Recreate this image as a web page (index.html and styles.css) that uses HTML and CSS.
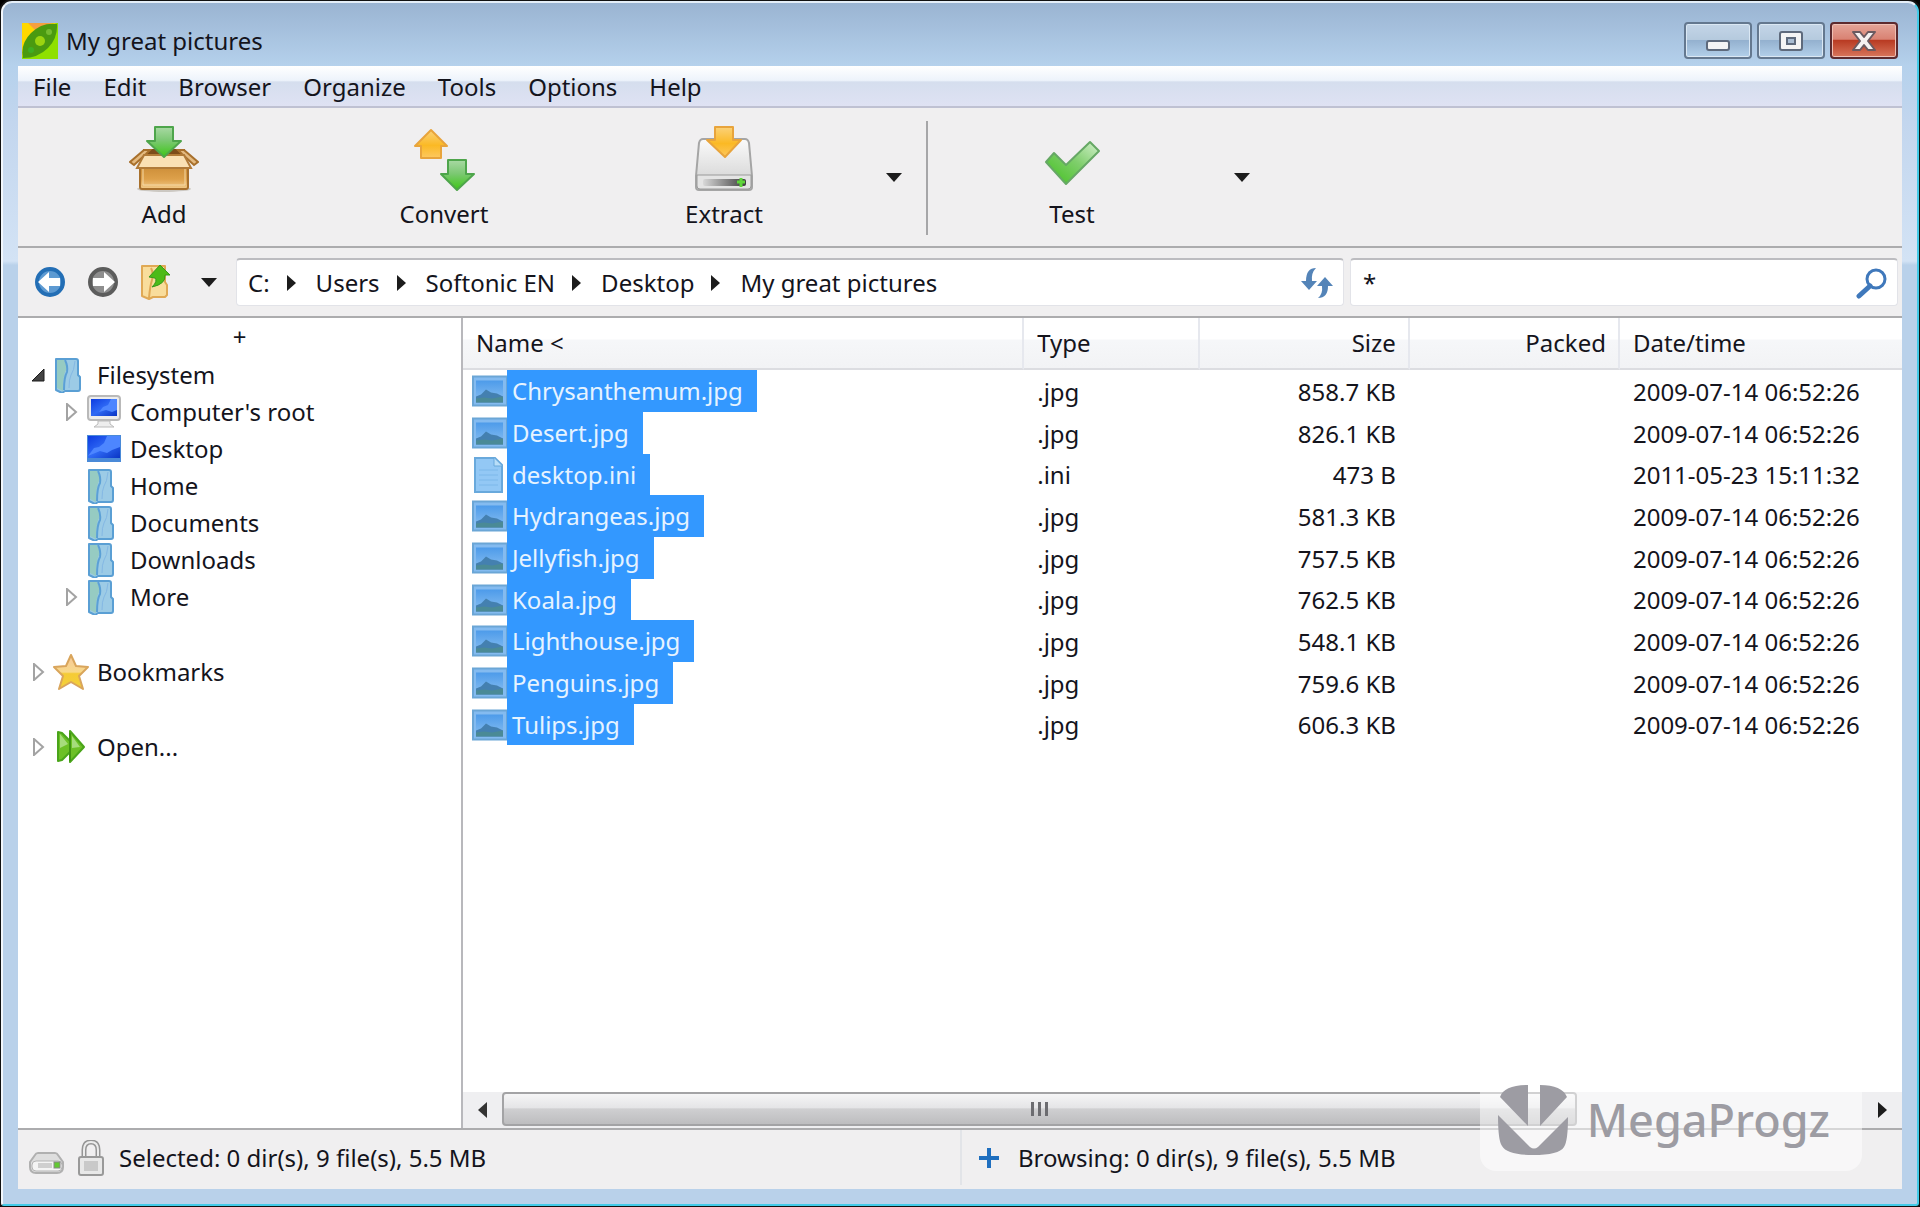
FILE: index.html
```html
<!DOCTYPE html>
<html lang="en">
<head>
    <meta charset="UTF-8">
    <meta name="viewport" content="width=device-width, initial-scale=1.0">
    <title>My great pictures</title>
    <link rel="stylesheet" href="styles.css">
</head>
<body>
    <!-- Shared icons -->
    <svg class="defs" width="0" height="0" aria-hidden="true">
        <defs>
            <linearGradient id="green" x1="0" y1="0" x2="0" y2="1">
                <stop offset="0" stop-color="#a9d9a4"/><stop offset="0.45" stop-color="#7cc873"/><stop offset="1" stop-color="#3cc714"/>
            </linearGradient>
            <linearGradient id="check" x1="1" y1="0" x2="0" y2="1">
                <stop offset="0" stop-color="#d3f0cc"/><stop offset="0.45" stop-color="#7fce6c"/><stop offset="1" stop-color="#3fc01a"/>
            </linearGradient>
            <linearGradient id="orange" x1="0" y1="0" x2="0" y2="1">
                <stop offset="0" stop-color="#fbd27a"/><stop offset="0.55" stop-color="#fbb924"/><stop offset="1" stop-color="#fdc860"/>
            </linearGradient>
            <linearGradient id="box" x1="0" y1="0" x2="0" y2="1">
                <stop offset="0" stop-color="#c98a35"/><stop offset="0.6" stop-color="#dda04a"/><stop offset="1" stop-color="#f3cd8c"/>
            </linearGradient>
            <linearGradient id="metal" x1="0" y1="0" x2="0" y2="1">
                <stop offset="0" stop-color="#fafafa"/><stop offset="1" stop-color="#cfcfcf"/>
            </linearGradient>
            <linearGradient id="slot" x1="0" y1="0" x2="1" y2="0">
                <stop offset="0" stop-color="#d8d8d8"/><stop offset="1" stop-color="#3c3c3c"/>
            </linearGradient>
            <linearGradient id="screen" x1="0" y1="0" x2="1" y2="1">
                <stop offset="0" stop-color="#0d3be0"/><stop offset="0.5" stop-color="#2f6af5"/><stop offset="1" stop-color="#0a35c4"/>
            </linearGradient>
            <linearGradient id="star" x1="0" y1="0" x2="0" y2="1">
                <stop offset="0" stop-color="#f6c79a"/><stop offset="0.5" stop-color="#f8d98a"/><stop offset="0.55" stop-color="#f5cb35"/><stop offset="1" stop-color="#f3d13c"/>
            </linearGradient>
            <linearGradient id="photo" x1="0" y1="0" x2="0" y2="1">
                <stop offset="0" stop-color="#4d9bea"/><stop offset="1" stop-color="#86bdf0"/>
            </linearGradient>
        </defs>
        <symbol id="i-folder" viewBox="0 0 36 36">
            <path d="M3 2h20q2 0 2 2v14l2 2v12q0 2-2 2H12l-3 2-6-3z" fill="#9ccbe6" stroke="#5a9fd4" stroke-width="2" stroke-linejoin="round"/>
            <path d="M4 3h7q3 5 2 10-3 5-3 21l-6-3z" fill="#96cbc2"/>
            <path d="M12 3q3 6 2 12-3 5-3 18" fill="none" stroke="#5ba0d6" stroke-width="2"/>
            <path d="M22 4q-1 10-4 14-2 4-2 13" fill="none" stroke="#84b8e4" stroke-width="1"/>
        </symbol>
        <symbol id="i-image" viewBox="0 0 35 31">
            <rect x="1" y="1" width="34" height="29" fill="#84bbf0" stroke="#6ba6d6" stroke-width="2"/>
            <rect x="4" y="5" width="27" height="21" fill="url(#photo)"/>
            <path d="M4 21l5-2 5-5 5 3 6 1 6 3v6H4z" fill="#4480b0"/>
            <path d="M4 23l8-1 8 1 11-2v6H4z" fill="#4a8a96"/>
        </symbol>
        <symbol id="i-text" viewBox="0 0 35 36">
            <path d="M3 1h20l7 7v27H3z" fill="#93c8f5" stroke="#69a9dc" stroke-width="2"/>
            <path d="M22 1v8h8" fill="#b9def8" stroke="#69a9dc"/>
            <path d="M7 13h19M7 18h19M7 23h19M7 28h19" stroke="#7db8ea"/>
        </symbol>
        <symbol id="i-closed" viewBox="0 0 12 18">
            <path d="M1 1l9 8-9 8z" fill="#fff" stroke="#a3a3a3" stroke-width="2"/>
        </symbol>
        <symbol id="i-down" viewBox="0 0 16 9"><path d="M0 0h16L8 9z" fill="#1c1c1c"/></symbol>
        <symbol id="i-next" viewBox="0 0 9 16"><path d="M0 0l9 8-9 8z" fill="#1c1c1c"/></symbol>
    </svg>

    <div class="window">
        <!-- Title bar -->
        <header class="titlebar">
            <svg class="app-icon" viewBox="0 0 36 36">
                <rect width="36" height="36" fill="#8fe000"/>
                <path d="M0 0h34L0 34z" fill="#ffd800"/>
                <path d="M6 0h24L14 8z" fill="#f5a040"/>
                <path d="M1 35Q-2 21 9 10 20-1 35 1q1 14-9 24T1 35z" fill="#4a9a10"/>
                <circle cx="18" cy="18" r="5" fill="#9bd410"/>
                <circle cx="27" cy="9" r="3" fill="#74bb30"/>
                <circle cx="9" cy="27" r="3" fill="#3fae22"/>
            </svg>
            <h1 class="title">My great pictures</h1>
            <div class="window-buttons">
                <button class="win-btn" aria-label="Minimize">
                    <svg width="26" height="28" viewBox="0 0 26 28"><rect x="2" y="14" width="22" height="9" rx="2" fill="#f4f4f4" stroke="#5e6a7c" stroke-width="2"/></svg>
                </button>
                <button class="win-btn" aria-label="Maximize">
                    <svg width="26" height="28" viewBox="0 0 26 28"><rect x="2" y="5" width="22" height="18" rx="2" fill="#f4f4f4" stroke="#5e6a7c" stroke-width="2"/><rect x="9" y="11" width="8" height="6" fill="#a9bdd3" stroke="#5e6a7c" stroke-width="2"/></svg>
                </button>
                <button class="win-btn win-close" aria-label="Close">
                    <svg width="26" height="28" viewBox="0 0 26 28"><path d="M2 5h7l4 5 4-5h7l-7 9 7 9h-7l-4-5-4 5H2l7-9z" fill="#f6f2f2" stroke="#6b5a60" stroke-width="2" stroke-linejoin="round"/></svg>
                </button>
            </div>
        </header>

        <div class="frame">
            <nav class="menubar">
                <button>File</button>
                <button>Edit</button>
                <button>Browser</button>
                <button>Organize</button>
                <button>Tools</button>
                <button>Options</button>
                <button>Help</button>
            </nav>

            <!-- Toolbar -->
            <div class="toolbar">
                <button class="tool">
                    <svg width="70" height="66" viewBox="0 0 70 66">
                        <ellipse cx="35" cy="63" rx="27" ry="3" fill="#ccc8c2"/>
                        <path d="M14 23h42l-2 16H16z" fill="#7d4c1a"/>
                        <path d="M11 38h48v23q0 2-2 2H13q-2 0-2-2z" fill="url(#box)" stroke="#a8702c" stroke-width="2"/>
                        <path d="M14 41v18h42V41" fill="none" stroke="#f5d9a6"/>
                        <path d="M15 24h6l-4 4-12 11-4-3z" fill="#e4ba80" stroke="#a8702c" stroke-width="2"/>
                        <path d="M49 24h6l14 12-4 3-12-11z" fill="#e4ba80" stroke="#a8702c" stroke-width="2"/>
                        <path d="M15 29h40l7 13H8z" fill="#fae0b4" stroke="#b17a38" stroke-width="2"/>
                        <path d="M26 1h18v14h8L35 31 18 15h8z" fill="url(#green)" stroke="#4ea54b" stroke-width="2" stroke-linejoin="round"/>
                    </svg>
                    Add
                </button>
                <button class="tool">
                    <svg width="70" height="66" viewBox="0 0 70 66">
                        <path d="M22 4l16 16h-6v12H12V20H6z" fill="url(#orange)" stroke="#e8a43c" stroke-width="2" stroke-linejoin="round"/>
                        <path d="M39 34h18v14h8L48 64 32 48h7z" fill="url(#green)" stroke="#4ea54b" stroke-width="2" stroke-linejoin="round"/>
                    </svg>
                    Convert
                </button>
                <button class="tool">
                    <svg width="70" height="66" viewBox="0 0 70 66">
                        <path d="M14 13h42q3 0 4 4l3 33v11q0 3-3 3H10q-3 0-3-3V50l3-33q1-4 4-4z" fill="url(#metal)" stroke="#a5a5a5" stroke-width="2"/>
                        <path d="M8 49h54v11q0 3-3 3H11q-3 0-3-3z" fill="#e4e4e4" stroke="#9a9a9a"/>
                        <rect x="14" y="53" width="43" height="7" rx="2" fill="url(#slot)"/>
                        <path d="M52 52v9M48 56h8" stroke="#5ed53a" stroke-width="3"/>
                        <path d="M26 1h18v13h8L36 31 18 14h8z" fill="url(#orange)" stroke="#e8a43c" stroke-width="2" stroke-linejoin="round"/>
                    </svg>
                    Extract
                </button>
                <button class="tool-more" aria-label="Extract options"><svg width="16" height="9"><use href="#i-down"/></svg></button>
                <span class="tool-sep"></span>
                <button class="tool">
                    <svg width="70" height="66" viewBox="0 0 70 66">
                        <path d="M9 36l8-9 12 12 24-23 9 9-33 33z" fill="url(#check)" stroke="#66a865" stroke-width="2" stroke-linejoin="round"/>
                    </svg>
                    Test
                </button>
                <button class="tool-more" aria-label="Test options"><svg width="16" height="9"><use href="#i-down"/></svg></button>
            </div>

            <!-- Address bar -->
            <div class="addressbar">
                <div class="nav-buttons">
                    <button aria-label="Back">
                        <svg width="32" height="32" viewBox="0 0 32 32"><circle cx="16" cy="16" r="13" fill="#5d9ad2" stroke="#236eb5" stroke-width="4"/><path d="M4 16L15 6v6h11v8H15v6z" fill="#fff"/></svg>
                    </button>
                    <button aria-label="Forward">
                        <svg width="32" height="32" viewBox="0 0 32 32"><circle cx="16" cy="16" r="13" fill="#8e8e8e" stroke="#5c5c5c" stroke-width="4"/><path d="M28 16L17 6v6H6v8h11v6z" fill="#fff"/></svg>
                    </button>
                    <button aria-label="Up">
                        <svg width="30" height="36" viewBox="0 0 30 36"><path d="M2 2h23v16l2 3v10l-2 2H13l-4 2-7-3z" fill="#f9dd9c" stroke="#e0a955" stroke-width="2" stroke-linejoin="round"/><path d="M11 4q3 6 1 12-2 6-3 18" fill="none" stroke="#e0a955" stroke-width="2"/><path d="M20 1l10 10h-5q1 9-13 12 6-6 3-9l-6-1z" fill="#4dbb18" stroke="#37991c"/></svg>
                    </button>
                    <button aria-label="History"><svg width="16" height="9"><use href="#i-down"/></svg></button>
                </div>
                <div class="field path">
                    <a href="#">C:</a><svg width="9" height="16"><use href="#i-next"/></svg>
                    <a href="#">Users</a><svg width="9" height="16"><use href="#i-next"/></svg>
                    <a href="#">Softonic EN</a><svg width="9" height="16"><use href="#i-next"/></svg>
                    <a href="#">Desktop</a><svg width="9" height="16"><use href="#i-next"/></svg>
                    <a href="#">My great pictures</a>
                    <button class="refresh" aria-label="Refresh">
                        <svg width="32" height="32" viewBox="0 0 32 32" fill="#5484b8"><path d="M15 1Q5 1 5 14H0l8 9 8-9h-5q-1-8 4-13z"/><path d="M17 31q10 0 10-12h5l-8-9-8 9h5q1 8-4 12z"/></svg>
                    </button>
                </div>
                <div class="field search">
                    <input type="text" value="*" aria-label="Search">
                    <button aria-label="Find">
                        <svg width="32" height="32" viewBox="0 0 32 32" fill="none" stroke="#3f78bb"><circle cx="20" cy="12" r="9" stroke-width="3"/><path d="M14 19L3 29" stroke-width="5" stroke-linecap="round"/></svg>
                    </button>
                </div>
            </div>

            <div class="main">
                <!-- Folder tree -->
                <aside class="sidebar">
                    <button class="add-panel">+</button>
                    <ul class="tree">
                        <li><a href="#"><svg class="toggle" viewBox="0 0 16 18"><path d="M13 3v12H1z" fill="#444" stroke="#1c1c1c"/></svg><svg class="icon"><use href="#i-folder"/></svg>Filesystem</a>
                            <ul>
                                <li><a href="#"><svg class="toggle"><use href="#i-closed"/></svg><svg class="icon" viewBox="0 0 36 36"><rect x="2" y="2" width="32" height="24" rx="3" fill="#ececec" stroke="#b9b9b9" stroke-width="2"/><rect x="5" y="5" width="26" height="17" fill="url(#screen)"/><path d="M13 18l4-5 5-2 3-6h6v11l-5 2-6-2z" fill="#4d86ff"/><path d="M12 27h12v3l4 3H8l4-3z" fill="#eee" stroke="#bbb"/></svg>Computer's root</a></li>
                                <li><a href="#"><span class="toggle"></span><svg class="icon" viewBox="0 0 36 36"><rect x="1" y="4" width="34" height="27" fill="#4a8ad8"/><rect x="2" y="5" width="32" height="22" fill="url(#screen)"/><path d="M2 25l6-8 5-1 5-4 3-7h13v11l-8 3-5 3-7-2z" fill="#4d86ff"/></svg>Desktop</a></li>
                                <li><a href="#"><span class="toggle"></span><svg class="icon"><use href="#i-folder"/></svg>Home</a></li>
                                <li><a href="#"><span class="toggle"></span><svg class="icon"><use href="#i-folder"/></svg>Documents</a></li>
                                <li><a href="#"><span class="toggle"></span><svg class="icon"><use href="#i-folder"/></svg>Downloads</a></li>
                                <li><a href="#"><svg class="toggle"><use href="#i-closed"/></svg><svg class="icon"><use href="#i-folder"/></svg>More</a></li>
                            </ul>
                        </li>
                        <li><a href="#"><svg class="toggle"><use href="#i-closed"/></svg><svg class="icon" viewBox="0 0 36 36"><path d="M18 1l5 11 12 1-9 9 4 13-12-7-12 7 4-13-9-9 12-1z" fill="url(#star)" stroke="#d9a55c" stroke-width="2" stroke-linejoin="round"/></svg>Bookmarks</a></li>
                        <li><a href="#"><svg class="toggle"><use href="#i-closed"/></svg><svg class="icon" viewBox="0 0 36 36"><path d="M5 3l4 1 8 8V2l14 16-14 15V23l-8 8-4 1z" fill="#6cc026" stroke="#4aa51a" stroke-width="2" stroke-linejoin="round"/><path d="M17 4v28" stroke="#3f9412" stroke-width="2"/><path d="M7 5v14l8-4zM19 7v12l8-1z" fill="#a6dc7c"/></svg>Open...</a></li>
                    </ul>
                </aside>

                <!-- File list -->
                <section class="files">
                    <div class="list">
                        <table>
                            <thead>
                                <tr>
                                    <th class="col-name">Name &lt;</th>
                                    <th class="col-type">Type</th>
                                    <th class="col-size num">Size</th>
                                    <th class="col-packed num">Packed</th>
                                    <th>Date/time</th>
                                </tr>
                            </thead>
                            <tbody>
                                <tr><td class="name"><svg><use href="#i-image"/></svg><span>Chrysanthemum.jpg</span></td><td>.jpg</td><td class="num">858.7 KB</td><td></td><td>2009-07-14 06:52:26</td></tr>
                                <tr><td class="name"><svg><use href="#i-image"/></svg><span>Desert.jpg</span></td><td>.jpg</td><td class="num">826.1 KB</td><td></td><td>2009-07-14 06:52:26</td></tr>
                                <tr><td class="name"><svg><use href="#i-text"/></svg><span>desktop.ini</span></td><td>.ini</td><td class="num">473 B</td><td></td><td>2011-05-23 15:11:32</td></tr>
                                <tr><td class="name"><svg><use href="#i-image"/></svg><span>Hydrangeas.jpg</span></td><td>.jpg</td><td class="num">581.3 KB</td><td></td><td>2009-07-14 06:52:26</td></tr>
                                <tr><td class="name"><svg><use href="#i-image"/></svg><span>Jellyfish.jpg</span></td><td>.jpg</td><td class="num">757.5 KB</td><td></td><td>2009-07-14 06:52:26</td></tr>
                                <tr><td class="name"><svg><use href="#i-image"/></svg><span>Koala.jpg</span></td><td>.jpg</td><td class="num">762.5 KB</td><td></td><td>2009-07-14 06:52:26</td></tr>
                                <tr><td class="name"><svg><use href="#i-image"/></svg><span>Lighthouse.jpg</span></td><td>.jpg</td><td class="num">548.1 KB</td><td></td><td>2009-07-14 06:52:26</td></tr>
                                <tr><td class="name"><svg><use href="#i-image"/></svg><span>Penguins.jpg</span></td><td>.jpg</td><td class="num">759.6 KB</td><td></td><td>2009-07-14 06:52:26</td></tr>
                                <tr><td class="name"><svg><use href="#i-image"/></svg><span>Tulips.jpg</span></td><td>.jpg</td><td class="num">606.3 KB</td><td></td><td>2009-07-14 06:52:26</td></tr>
                            </tbody>
                        </table>
                    </div>
                    <div class="scrollbar">
                        <button aria-label="Scroll left"><svg width="9" height="16" viewBox="0 0 9 16"><path d="M9 0L0 8l9 8z" fill="#333"/></svg></button>
                        <div class="track"><div class="thumb"><i></i><i></i><i></i></div></div>
                        <button aria-label="Scroll right"><svg width="9" height="16"><use href="#i-next"/></svg></button>
                    </div>
                </section>
            </div>

            <!-- Status bar -->
            <footer class="statusbar">
                <div class="status">
                    <svg class="drive" width="37" height="36" viewBox="0 0 37 36"><path d="M10 13h17q2 0 3 2l5 7v5q0 6-6 6H8q-6 0-6-6v-5l5-7q1-2 3-2z" fill="#dedede" stroke="#b0b0b0" stroke-width="2"/><rect x="4" y="21" width="30" height="10" rx="4" fill="#f4f4f4" stroke="#b5b5b5"/><rect x="10" y="23" width="14" height="5" fill="#cfcfcf"/><rect x="26" y="22" width="6" height="6" fill="#62c833" stroke="#888"/></svg>
                    <svg width="28" height="36" viewBox="0 0 28 36"><path d="M7 18V10q0-8 7-8t7 8v8" fill="none" stroke="#959595" stroke-width="5"/><path d="M7 18V10q0-8 7-8t7 8v8" fill="none" stroke="#ececec" stroke-width="2"/><rect x="2" y="17" width="24" height="18" rx="2" fill="#e8e8e8" stroke="#999" stroke-width="2"/><rect x="7" y="21" width="14" height="10" fill="#c9c9c9"/></svg>
                    <span>Selected: 0 dir(s), 9 file(s), 5.5 MB</span>
                </div>
                <div class="status browsing">
                    <svg width="22" height="22" viewBox="0 0 22 22"><path d="M11 1v20M1 11h20" stroke="#1f6fbf" stroke-width="4"/></svg>
                    <span>Browsing: 0 dir(s), 9 file(s), 5.5 MB</span>
                </div>
            </footer>
        </div>

        <div class="watermark">
            <svg width="70" height="70" viewBox="0 0 70 70" fill="#9d9ca3"><path d="M2 12Q6 0 30 0v41zM42 0q22 0 27 12L42 41zM0 30l32 32q4 3 8 0l30-30q0 24-4 30-5 8-31 8T4 61Q0 56 0 30z"/></svg>
            <span>MegaProgz</span>
        </div>
    </div>
</body>
</html>
```
FILE: styles.css
```css
* {
    box-sizing: border-box;
}

body {
    margin: 0;
    background: #000;
    color: #14141c;
    font-family: "Noto Sans", "Open Sans", sans-serif;
    font-size: 24px;
    line-height: 36px;
}

button {
    display: flex;
    align-items: center;
    justify-content: center;
    padding: 0;
    border: none;
    background: none;
    color: inherit;
    font: inherit;
}

a {
    color: inherit;
    text-decoration: none;
}

svg {
    display: block;
    flex-shrink: 0;
}

.defs {
    position: absolute;
}

/* Window */
.window {
    position: relative;
    display: flex;
    flex-direction: column;
    height: 100vh;
    padding: 0 15px 15px;
    border: 3px solid #f2f7fc;
    border-top-color: #e4eef8;
    border-right-color: #43cbe8;
    border-bottom-color: #43cbe8;
    border-radius: 12px 12px 4px 4px;
    outline: 2px solid #111;
    outline-offset: -1px;
    background: linear-gradient(#9ab4d2 0, #b5d1ec 63px, #c3d6ee 120px, #d3e3f5 258px, #b9d1ea 262px);
}

.titlebar {
    display: flex;
    align-items: center;
    height: 63px;
    padding: 12px 4px 0;
    flex-shrink: 0;
}

.app-icon {
    width: 36px;
    height: 36px;
}

.title {
    flex: 1;
    margin: 0 0 0 8px;
    font-size: 24px;
    font-weight: 400;
}

.window-buttons {
    display: flex;
    gap: 5px;
}

.win-btn {
    width: 68px;
    height: 37px;
    border: 2px solid #64788f;
    border-radius: 4px;
    background: linear-gradient(#c4d5e7 0, #b5cade 48%, #94b1cf 50%, #b3d0ea 100%);
    box-shadow: inset 0 0 0 1px #dbe8f4;
}

.win-close {
    border-color: #5d2a2e;
    background: linear-gradient(#e5a598 0, #d98273 46%, #b93b23 50%, #d8765c 100%);
    box-shadow: inset 0 0 0 1px #efc0b5;
}

.frame {
    display: flex;
    flex-direction: column;
    flex: 1;
    min-height: 0;
    background: #f0eff0;
}

.menubar {
    display: flex;
    gap: 32px;
    height: 42px;
    padding: 2px 15px 0;
    flex-shrink: 0;
    border-bottom: 2px solid #bfc1d2;
    background: linear-gradient(#fff 0, #edf3fb 36%, #d5deee 40%, #dfe2f3 100%);
}

/* Toolbar */
.toolbar {
    display: flex;
    align-items: stretch;
    height: 140px;
    padding: 0 6px;
    flex-shrink: 0;
    border-bottom: 2px solid #acacae;
}

.tool {
    flex-direction: column;
    justify-content: flex-start;
    gap: 4px;
    width: 280px;
    padding-top: 18px;
}

.tool-more {
    width: 60px;
}

.tool-sep {
    width: 2px;
    margin: 13px 4px 11px 2px;
    background: #a6a6a8;
}

/* Address bar */
.addressbar {
    display: flex;
    align-items: center;
    gap: 6px;
    height: 70px;
    padding: 0 4px 0 16px;
    flex-shrink: 0;
    border-bottom: 2px solid #acacae;
}

.nav-buttons {
    display: flex;
    align-items: center;
    gap: 21px;
    width: 196px;
}

.nav-buttons button:last-child {
    margin-left: 10px;
}

.field {
    display: flex;
    align-items: center;
    height: 48px;
    border: 1px solid #e2e3e8;
    border-top: 2px solid #bcbcc0;
    border-radius: 4px;
    background: #fff;
}

.path {
    flex: 1;
    padding: 0 10px 0 11px;
}

.path > svg {
    margin: 0 20px 0 17px;
}

.refresh {
    margin-left: auto;
}

.search {
    flex: 0 1 548px;
    padding: 0 9px 0 12px;
}

.search input {
    flex: 1;
    min-width: 0;
    padding: 0;
    border: none;
    outline: none;
    background: none;
    color: inherit;
    font: inherit;
}

/* Main area */
.main {
    display: flex;
    flex: 1;
    min-height: 0;
    background: #fff;
    border-bottom: 2px solid #acacae;
}

.sidebar {
    width: 445px;
    flex-shrink: 0;
    border-right: 2px solid #b8b8bc;
}

.add-panel {
    width: 100%;
    height: 38px;
}

.tree,
.tree ul {
    margin: 0;
    padding: 0;
    list-style: none;
}

.tree {
    display: flex;
    flex-direction: column;
    gap: 38px;
    padding-left: 13px;
}

.tree ul {
    padding-left: 33px;
}

.tree a {
    display: flex;
    align-items: center;
    height: 37px;
}

.tree .toggle {
    width: 16px;
    height: 18px;
}

.tree .icon {
    width: 36px;
    height: 36px;
    margin: 0 8px 0 6px;
}

/* File list */
.files {
    display: flex;
    flex-direction: column;
    flex: 1;
    min-width: 0;
}

.list {
    flex: 1;
    min-height: 0;
}

table {
    width: 100%;
    border-collapse: separate;
    border-spacing: 0;
    table-layout: fixed;
}

th {
    height: 52px;
    padding: 0 12px 0 13px;
    border-right: 2px solid #e6e8ee;
    border-bottom: 2px solid #dcdde1;
    background: linear-gradient(#fff 0, #fff 42%, #f6f7f9 44%, #f2f3f5 100%);
    font-weight: 400;
    text-align: left;
}

th:last-child {
    border-right: none;
}

td {
    height: 42px;
    padding: 0 14px 0 13px;
    line-height: 41px;
    white-space: nowrap;
}

tbody tr:nth-child(3n) td {
    height: 41px;
}

.col-name {
    width: 39%;
}

.col-type {
    width: 12.2%;
}

.col-size,
.col-packed {
    width: 14.6%;
}

.num {
    text-align: right;
}

td.name {
    display: flex;
    align-items: center;
    padding: 0 0 0 9px;
}

.name svg {
    width: 35px;
    height: 36px;
}

.name span {
    height: 100%;
    padding: 0 14px 0 5px;
    background: #3398ff;
    color: #e6f3ff;
}

.scrollbar {
    display: flex;
    height: 36px;
    background: #efeff1;
}

.scrollbar button {
    width: 39px;
}

.track {
    flex: 1;
}

.thumb {
    display: flex;
    align-items: center;
    justify-content: center;
    gap: 4px;
    width: 79%;
    height: 34px;
    border: 2px solid #a3a3a5;
    border-radius: 4px;
    background: linear-gradient(#f5f5f6 0, #e5e5e7 45%, #cfcfd1 50%, #bdbdbf 100%);
}

.thumb i {
    width: 3px;
    height: 14px;
    background: #6c6c70;
}

/* Status bar */
.statusbar {
    display: flex;
    height: 59px;
    padding-bottom: 4px;
    flex-shrink: 0;
}

.status {
    display: flex;
    align-items: center;
    width: 50%;
    padding-left: 10px;
}

.status .drive {
    margin-right: 12px;
}

.status span {
    margin-left: 14px;
}

.browsing {
    padding-left: 16px;
    border-left: 2px solid #e2e4e8;
}

.browsing span {
    margin-left: 18px;
}

.watermark {
    position: absolute;
    right: 55px;
    bottom: 33px;
    display: flex;
    align-items: center;
    gap: 19px;
    height: 79px;
    padding: 0 32px 24px 18px;
    border-radius: 0 0 16px 16px;
    background: rgba(255, 255, 255, 0.5);
    color: #9d9ca3;
    font-size: 45px;
    font-weight: 500;
}
```
